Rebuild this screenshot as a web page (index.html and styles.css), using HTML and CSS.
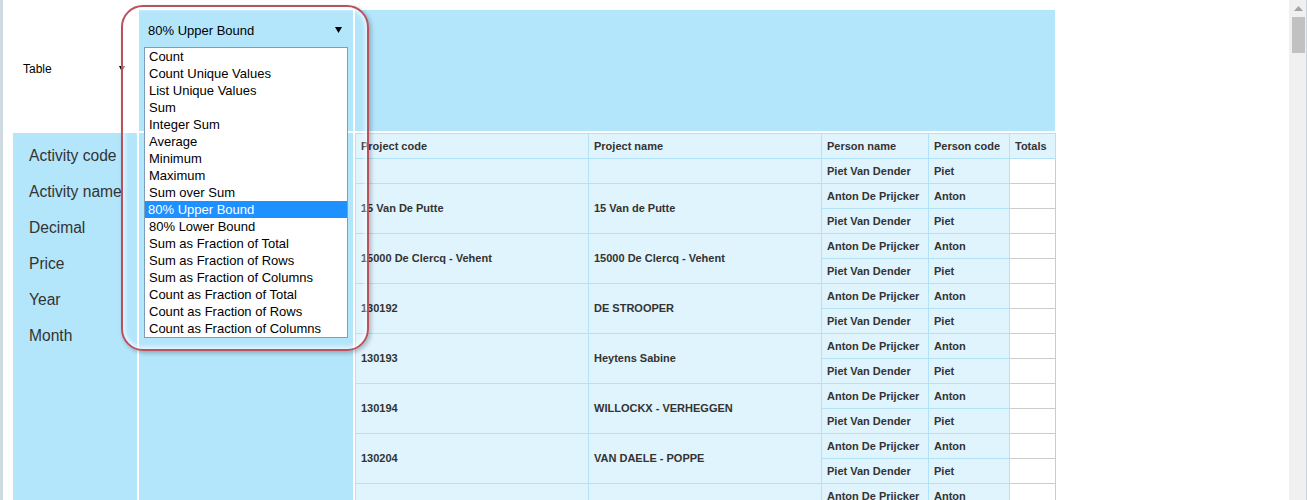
FILE: index.html
```html
<!DOCTYPE html>
<html>
<head>
<meta charset="utf-8">
<link rel="stylesheet" href="styles.css">
</head>
<body>
<div class="window">
  <div class="edge-left"></div>
  <div class="content">
    <div class="pvt-ui">
      <div class="cell renderer">
        <div class="renderer-select"><span>Table</span><svg class="arrow" width="6" height="6" viewBox="0 0 6 6"><polygon points="0,0 6,0 3,6" fill="#000"/></svg></div>
      </div>
      <div class="cell aggregator">
        <div class="agg-select"><span>80% Upper Bound</span><svg class="arrow" width="7" height="6" viewBox="0 0 7 6"><polygon points="0,0 7,0 3.5,6" fill="#000"/></svg></div>
        <ul class="listbox">
          <li>Count</li>
          <li>Count Unique Values</li>
          <li>List Unique Values</li>
          <li>Sum</li>
          <li>Integer Sum</li>
          <li>Average</li>
          <li>Minimum</li>
          <li>Maximum</li>
          <li>Sum over Sum</li>
          <li class="selected">80% Upper Bound</li>
          <li>80% Lower Bound</li>
          <li>Sum as Fraction of Total</li>
          <li>Sum as Fraction of Rows</li>
          <li>Sum as Fraction of Columns</li>
          <li>Count as Fraction of Total</li>
          <li>Count as Fraction of Rows</li>
          <li>Count as Fraction of Columns</li>
        </ul>
        <div class="highlight-frame"></div>
      </div>
      <div class="cell cols"></div>
      <div class="cell attrs">
        <ul class="attr-list">
          <li>Activity code</li>
          <li>Activity name</li>
          <li>Decimal</li>
          <li>Price</li>
          <li>Year</li>
          <li>Month</li>
        </ul>
      </div>
      <div class="cell rows"></div>
      <div class="cell output">
        <table class="pvt-table">
          <colgroup>
            <col class="c1"><col class="c2"><col class="c3"><col class="c4"><col class="c5">
          </colgroup>
          <thead>
            <tr><th>Project code</th><th>Project name</th><th>Person name</th><th>Person code</th><th>Totals</th></tr>
          </thead>
          <tbody>
            <tr><th></th><th></th><th>Piet Van Dender</th><th>Piet</th><td class="val"></td></tr>
            <tr><th class="span" rowspan="2">15 Van De Putte</th><th class="span" rowspan="2">15 Van de Putte</th><th>Anton De Prijcker</th><th>Anton</th><td class="val"></td></tr>
            <tr><th>Piet Van Dender</th><th>Piet</th><td class="val"></td></tr>
            <tr><th class="span" rowspan="2">15000 De Clercq - Vehent</th><th class="span" rowspan="2">15000 De Clercq - Vehent</th><th>Anton De Prijcker</th><th>Anton</th><td class="val"></td></tr>
            <tr><th>Piet Van Dender</th><th>Piet</th><td class="val"></td></tr>
            <tr><th class="span" rowspan="2">130192</th><th class="span" rowspan="2">DE STROOPER</th><th>Anton De Prijcker</th><th>Anton</th><td class="val"></td></tr>
            <tr><th>Piet Van Dender</th><th>Piet</th><td class="val"></td></tr>
            <tr><th class="span" rowspan="2">130193</th><th class="span" rowspan="2">Heytens Sabine</th><th>Anton De Prijcker</th><th>Anton</th><td class="val"></td></tr>
            <tr><th>Piet Van Dender</th><th>Piet</th><td class="val"></td></tr>
            <tr><th class="span" rowspan="2">130194</th><th class="span" rowspan="2">WILLOCKX - VERHEGGEN</th><th>Anton De Prijcker</th><th>Anton</th><td class="val"></td></tr>
            <tr><th>Piet Van Dender</th><th>Piet</th><td class="val"></td></tr>
            <tr><th class="span" rowspan="2">130204</th><th class="span" rowspan="2">VAN DAELE - POPPE</th><th>Anton De Prijcker</th><th>Anton</th><td class="val"></td></tr>
            <tr><th>Piet Van Dender</th><th>Piet</th><td class="val"></td></tr>
            <tr><th class="span" rowspan="2"></th><th class="span" rowspan="2"></th><th>Anton De Prijcker</th><th>Anton</th><td class="val"></td></tr>
            <tr><th>Piet Van Dender</th><th>Piet</th><td class="val"></td></tr>
          </tbody>
        </table>
      </div>
    </div>
  </div>
  <div class="scrollbar">
    <svg class="scroll-up" width="9" height="5" viewBox="0 0 9 5"><polygon points="4.5,0 9,5 0,5" fill="#a3a3a3"/></svg>
    <div class="thumb"></div>
  </div>
  <div class="edge-right"></div>
</div>
</body>
</html>
```
FILE: styles.css
```css
* { box-sizing: border-box; }

html, body {
  margin: 0;
  padding: 0;
  background: #fff;
  font-family: "Liberation Sans", Arial, sans-serif;
  color: #000;
}

.window {
  display: flex;
  width: 1307px;
  height: 500px;
  overflow: hidden;
}

.edge-left {
  width: 3px;
  flex: none;
  background: #cfdbe3;
}

.content {
  flex: 1;
  padding: 10px 0 0 10px;
  overflow: hidden;
}

.scrollbar {
  width: 17px;
  flex: none;
  background: #f0f0f0;
  position: relative;
  display: flex;
  flex-direction: column;
  align-items: center;
}

.scroll-up {
  margin-top: 6px;
  margin-left: 1px;
}

.thumb {
  margin-top: 6px;
  margin-left: 2px;
  width: 13px;
  height: 36px;
  background: #c1c1c1;
}

.edge-right {
  width: 1px;
  flex: none;
  background: #c9d6df;
}

.pvt-ui {
  display: grid;
  grid-template-columns: 124px 214px 700px;
  grid-template-rows: 121px auto;
  gap: 2px;
}

.cell {
  background: #b3e5fb;
}

.renderer {
  background: #fff;
  display: flex;
  align-items: center;
}

.renderer-select {
  margin-left: 10px;
  margin-top: -4px;
  width: 102px;
  display: flex;
  justify-content: space-between;
  align-items: center;
  font-size: 12px;
  line-height: 16px;
  color: #000;
}

.renderer-select .arrow {
  margin-top: 1px;
}

.aggregator {
  position: relative;
}

.agg-select {
  margin-top: 11px;
  height: 20px;
  padding: 0 11px 0 9px;
  display: flex;
  justify-content: space-between;
  align-items: center;
  font-size: 13px;
  line-height: 20px;
  color: #000;
}

.agg-select .arrow {
  margin-top: -2px;
}

.listbox {
  position: absolute;
  left: 5px;
  top: 37px;
  width: 204px;
  height: 291px;
  margin: 0;
  padding: 0;
  list-style: none;
  background: #fff;
  border: 1px solid #7f9db9;
  z-index: 2;
}

.listbox li {
  height: 17px;
  line-height: 17px;
  font-size: 13px;
  padding-left: 4px;
  color: #000;
  white-space: nowrap;
}

.listbox li.selected {
  background: #1e90ff;
  color: #fff;
  padding-left: 3px;
}

.highlight-frame {
  position: absolute;
  left: -18px;
  top: -5px;
  width: 248px;
  height: 346px;
  border: 2px solid #b9525e;
  border-radius: 22px;
  box-shadow: inset 0 0 4px 2px rgba(255, 255, 255, 0.75), 2px 2px 4px rgba(0, 0, 0, 0.25);
  z-index: 3;
  pointer-events: none;
}

.attr-list {
  margin: 0;
  padding: 5px 0 0 16px;
  list-style: none;
}

.attr-list li {
  height: 36px;
  line-height: 36px;
  font-size: 15.6px;
  color: #333;
  white-space: nowrap;
}

.output {
  background: #fff;
}

.pvt-table {
  border-collapse: collapse;
  table-layout: fixed;
  width: 700px;
}

.c1 { width: 233px; }
.c2 { width: 233px; }
.c3 { width: 107px; }
.c4 { width: 81px; }
.c5 { width: 46px; }

.pvt-table th,
.pvt-table td {
  border: 1px solid #b2e2f8;
  padding: 6px 5px;
  line-height: 12px;
  height: 25px;
  font-size: 11px;
  font-weight: bold;
  color: #333;
  text-align: left;
  vertical-align: middle;
  white-space: nowrap;
  overflow: hidden;
}

.pvt-table th {
  background: #e0f4fd;
}

.pvt-table th.span {
  padding-top: 5px;
  padding-bottom: 7px;
}

.pvt-table td.val {
  background: #fff;
  border-color: #cccccc;
  border-left-color: #b2e2f8;
}
```
